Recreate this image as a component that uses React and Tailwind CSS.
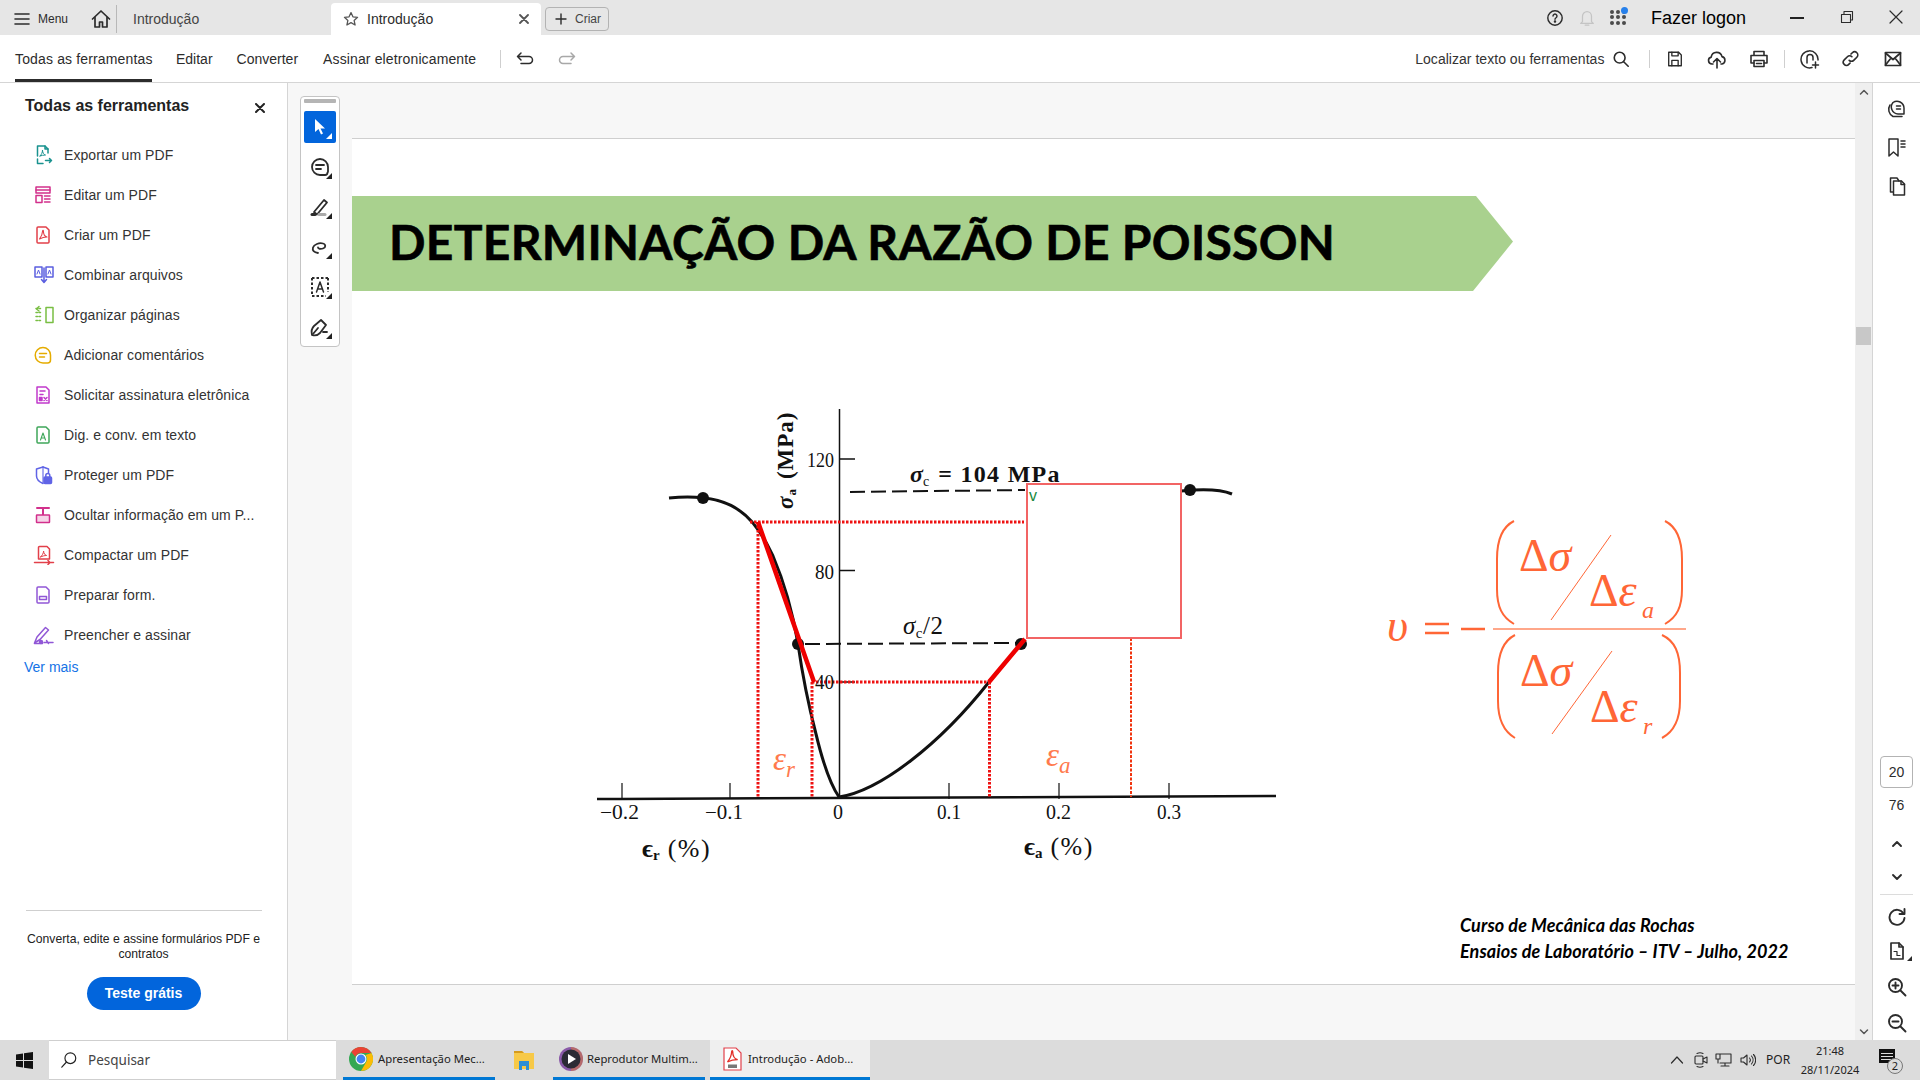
import React from "react";

const S = ({ w = 20, h = 20, vb = "0 0 20 20", c = "#2c2c2c", sw = 1.5, children, className = "" }) => (
  <svg width={w} height={h} viewBox={vb} fill="none" stroke={c} strokeWidth={sw} strokeLinecap="round" strokeLinejoin="round" className={"shrink-0 " + className}>{children}</svg>
);

const swoosh = "M6.5 14 C8 12 9.5 9 9.6 6 C9.7 5 10.4 5 10.4 6 C10.4 9 12 11.5 14 12 C11.5 12 9 12.6 6.5 14 Z";
const Tri = () => <path d="M24 18v6h-6z" fill="#222" stroke="none" />;

const tools = [
  ["Exportar um PDF", <S c="#19928f"><path d="M15 8V4l-3-3H4.500v10" /><path d="M4.500 14v4.500H10" /><path d="M12 1v3h3" /><path d="M7 11c1.500-1.500 2.500-3.500 2.500-6 0 3 1.500 4.500 3 5-2 0-4 .5-5.500 1z" strokeWidth="1" /><path d="M12.500 15.500h6m-2-2 2 2-2 2" /></S>],
  ["Editar um PDF", <S c="#d2308c"><rect x="3" y="2" width="14" height="6" /><path d="M3 5h14" /><rect x="3" y="10.500" width="6" height="7" /><path d="M11.500 11h5.500M11.500 14h5.500M11.500 17h5.500" /></S>],
  ["Criar um PDF", <S c="#e2404a"><path d="M13 2H5a1 1 0 0 0-1 1v14a1 1 0 0 0 1 1h10a1 1 0 0 0 1-1V5z" /><path d={swoosh} strokeWidth="1.100" /></S>],
  ["Combinar arquivos", <S w={22} vb="0 0 22 20" c="#5b5fe0"><path d="M2 2h7v10H2zM13 2h7v10h-7z" /><path d="M4 9l1.500-4 1.500 4M15 9l1.500-4 1.500 4" strokeWidth="1" /><path d="M11 3v14m-2.500-2.500 2.500 3 2.500-3" /></S>],
  ["Organizar páginas", <S w={22} vb="0 0 22 20" c="#79be43"><rect x="13" y="2.500" width="7" height="15" /><path d="M3 3.500h6M3 7.500h6M3 11.500h6M3 15.500h6" strokeDasharray="1.500 1.500" /><path d="M6 1.500 3.500 4 6 6" /></S>],
  ["Adicionar comentários", <S c="#e5ac00"><path d="M10 2.500a7.500 7.500 0 0 1 7.500 7.500v5a3 3 0 0 1-3 3H10a7.500 7.500 0 0 1 0-15.500z" /><path d="M6.500 8.500h7M6.500 12h5" /></S>],
  ["Solicitar assinatura eletrônica", <S c="#c13acb"><path d="M13 2H4v16h12V5z" /><path d="M7 6h5M7 9.500h3" /><rect x="6.500" y="12.500" width="2.500" height="3" fill="#c13acb" /><path d="m11 12.500 3 3m0-3-3 3" /></S>],
  ["Dig. e conv. em texto", <S c="#3fa65a"><path d="M13 2H5a1 1 0 0 0-1 1v14a1 1 0 0 0 1 1h10a1 1 0 0 0 1-1V5z" /><path d="M7.500 15l2.500-7 2.500 7M8.500 13h3" strokeWidth="1.100" /></S>],
  ["Proteger um PDF", <S c="#6064e6"><path d="M10 2 3.500 4v7c0 3.500 3 6 6.500 7.500" /><path d="M10 2l5.500 2v3.500" /><path d="M10 2v16" strokeWidth="1.100" /><rect x="11" y="12" width="7.500" height="6.500" rx="1" fill="#6064e6" /><path d="M12.800 12v-1.500a2 2 0 0 1 4 0V12" /></S>],
  ["Ocultar informação em um P...", <S c="#d2308c"><path d="M4 3h12M10 3v7" strokeWidth="2" /><rect x="3.500" y="10" width="13" height="7.500" rx=".500" fill="#f6d5e8" /></S>],
  ["Compactar um PDF", <S w={22} vb="0 0 22 20" c="#e2404a"><path d="M14 1.500H6.500a1 1 0 0 0-1 1V14h11V4z" /><path d="M7.500 12c1.500-1.500 3-3.500 3.100-6 .1 2.500 1.500 4 3 4.500-2 0-4 .5-6.100 1.500z" strokeWidth="1" /><path d="M1.500 17.500h19M15 15.500l2 2-2 2" /></S>],
  ["Preparar form.", <S c="#9157d6"><path d="M13 2H5a1 1 0 0 0-1 1v14a1 1 0 0 0 1 1h10a1 1 0 0 0 1-1V5z" /><rect x="6.500" y="11.500" width="7" height="3" /></S>],
  ["Preencher e assinar", <S w={22} vb="0 0 22 20" c="#9157d6"><path d="M1.500 18 4 12 12.500 2.500l3 2.500L7 14.500z" /><path d="M1.500 18.500h8" /><circle cx="8" cy="17" r="1.500" fill="#9157d6" /><path d="M11 17.500h9M13.500 15.500l2 3" /></S>],
];

function Slide() {
  return (
    <div className="w-[1503px] h-[847px] bg-white border-y border-[#cfcfcf] flex flex-col shrink-0">
      <div className="mt-[57px] w-[1161px] h-[95px] bg-[#a9d18e] [clip-path:polygon(0_0,1124px_0,100%_48%,1121px_100%,0_100%)] flex items-center pl-[37px] pb-[4px]">
        <span className="text-[48px] font-bold text-black whitespace-nowrap tracking-[0.3px] [-webkit-text-stroke:0.6px_black] font-['Lato',sans-serif]">DETERMINAÇÃO DA RAZÃO DE POISSON</span>
      </div>
      <div className="flex mt-[108px] ml-[238px]">
        <svg width="700" height="480" viewBox="590 400 700 480" className="shrink-0" fontFamily="'Liberation Serif',serif" fill="#111">
          <g stroke="#111" fill="none">
            <path d="M839.500 410V798" strokeWidth="1.500" />
            <path d="M597 800 C 800 800 1000 798 1276 797" strokeWidth="2.500" />
            <path d="M622 784V800M730 784V800M949 784V800M1059 784V800M1169 784V800" strokeWidth="1.200" />
            <path d="M840 460H855M840 571.500H855M840 683H855" strokeWidth="1.500" />
            <path d="M669 499C690 497 720 497 740 512C755 522 765 540 773 557C785 585 793 615 798 645C803 680 810 712 816 735C822 760 830 785 839 798" strokeWidth="3" />
            <path d="M839 798C880 792 940 745 989 683L1021 645" strokeWidth="3" />
            <path d="M1181 492 C1200 490 1220 490 1232 495" strokeWidth="3" />
            <path d="M850 493 L1025 491M805 645 L1016 644" strokeWidth="2" strokeDasharray="15 6" />
          </g>
          <circle cx="703" cy="499" r="6" /><circle cx="798" cy="645" r="6" /><circle cx="1021" cy="645" r="6" /><circle cx="1190" cy="491" r="6" />
          <g stroke="#ee1111" fill="none" strokeWidth="3" strokeDasharray="2.500 1.500">
            <path d="M750 523H1024M758 523V798M812 683H989M812 683V798M989.500 683V798" />
          </g>
          <path d="M1131 639V798" stroke="#f0340f" strokeWidth="2" strokeDasharray="3 1.500" />
          <path d="M758 523 814 683M989 683 1025 640" stroke="#ee0000" strokeWidth="4.500" fill="none" />
          <rect x="1027" y="485" width="154" height="154" fill="#fff" stroke="#f26464" strokeWidth="2" />
          <text x="1029" y="502" fontSize="16" fill="#188a3c" fontFamily="'Liberation Sans',sans-serif">v</text>
          <g fontSize="20">
            <text x="807" y="468" textLength="27" lengthAdjust="spacingAndGlyphs">120</text>
            <text x="815" y="580" textLength="19" lengthAdjust="spacingAndGlyphs">80</text>
            <text x="815" y="690" textLength="19" lengthAdjust="spacingAndGlyphs">40</text>
            <text x="600" y="820" textLength="39" lengthAdjust="spacingAndGlyphs">−0.2</text>
            <text x="705" y="820" textLength="38" lengthAdjust="spacingAndGlyphs">−0.1</text>
            <text x="833" y="820">0</text>
            <text x="937" y="820" textLength="24" lengthAdjust="spacingAndGlyphs">0.1</text>
            <text x="1046" y="820" textLength="25" lengthAdjust="spacingAndGlyphs">0.2</text>
            <text x="1157" y="820" textLength="24" lengthAdjust="spacingAndGlyphs">0.3</text>
          </g>
          <text x="642" y="858" fontSize="26" fontWeight="bold">ϵ<tspan fontSize="15" dy="3">r</tspan><tspan dy="-3" dx="8" fontWeight="normal" letterSpacing="1.500">(%)</tspan></text>
          <text x="1024" y="856" fontSize="26" fontWeight="bold">ϵ<tspan fontSize="15" dy="3">a</tspan><tspan dy="-3" dx="8" fontWeight="normal" letterSpacing="1.500">(%)</tspan></text>
          <text transform="translate(793 510) rotate(-90)" fontSize="23" fontWeight="bold" letterSpacing="1"><tspan fontStyle="italic">σ</tspan><tspan fontSize="13" dy="3">a</tspan><tspan dy="-3" dx="9">(MPa)</tspan></text>
          <text x="910" y="483" fontSize="24" fontWeight="bold"><tspan fontStyle="italic">σ</tspan><tspan fontSize="14" dy="4" fontWeight="normal">c</tspan><tspan dy="-4" dx="9" letterSpacing="1.300">= 104 MPa</tspan></text>
          <text x="903" y="635" fontSize="25" letterSpacing="0.500"><tspan fontStyle="italic">σ</tspan><tspan fontSize="15" dy="4">c</tspan><tspan dy="-4">/2</tspan></text>
          <text x="773" y="771" fontSize="33" fontStyle="italic" fill="#ff7a4d">ε<tspan fontSize="23" dy="7">r</tspan></text>
          <text x="1046" y="767" fontSize="33" fontStyle="italic" fill="#ff7a4d">ε<tspan fontSize="23" dy="7">a</tspan></text>
        </svg>
        <svg width="320" height="240" viewBox="1380 510 320 240" className="shrink-0 ml-[90px] mt-[110px]" fontFamily="'Liberation Serif',serif" fill="#ff6636">
          <text x="1387" y="642" fontSize="46" fontStyle="italic">υ</text>
          <g stroke="#ff6636" fill="none" strokeWidth="2">
            <path d="M1425 625H1449M1425 634H1449M1461 630H1485" strokeWidth="2.500" />
            <path d="M1493 630H1686" strokeWidth="1.500" stroke="#ff8a63" />
            <path d="M1611 536 1551 621M1612 652 1552 735" strokeWidth="1" />
            <path d="M1514 522C1502 528 1497 540 1497 560V590C1497 608 1502 618 1514 625M1665 522C1677 528 1682 540 1682 560V590C1682 608 1677 618 1665 625" />
            <path d="M1515 636C1503 642 1498 654 1498 674V702C1498 720 1503 732 1515 739M1662 636C1675 642 1680 654 1680 674V702C1680 720 1675 732 1662 739" />
          </g>
          <text x="1519" y="572" fontSize="46">Δ<tspan fontStyle="italic">σ</tspan></text>
          <text x="1589" y="607" fontSize="46">Δ<tspan fontStyle="italic">ε</tspan></text>
          <text x="1642" y="619" fontSize="24" fontStyle="italic">a</text>
          <text x="1520" y="687" fontSize="46">Δ<tspan fontStyle="italic">σ</tspan></text>
          <text x="1590" y="723" fontSize="46">Δ<tspan fontStyle="italic">ε</tspan></text>
          <text x="1643" y="735" fontSize="24" fontStyle="italic">r</text>
        </svg>
      </div>
      <div className="ml-[1108px] mt-[33px] text-[18px] tracking-[0.1px] leading-[26px] font-bold italic text-black whitespace-nowrap font-['Lato',sans-serif]">
        <div>Curso de Mecânica das Rochas</div>
        <div>Ensaios de Laboratório – ITV – Julho, 2022</div>
      </div>
    </div>
  );
}

function ToolBtn({ active, children }) {
  return <div className={"w-[32px] h-[32px] rounded-[2px] flex items-center justify-center " + (active ? "bg-[#0265dc]" : "")}>{children}</div>;
}

export default function App() {
  return (
    <div className="w-[1920px] h-[1080px] overflow-hidden flex flex-col bg-white text-[#2c2c2c] font-['Liberation_Sans',Arial,sans-serif]">
      {/* title bar */}
      <div className="h-[35px] shrink-0 bg-[#e6e6e6] flex items-center pt-[3px]">
        <S w={16} h={14} vb="0 0 16 14" sw={1.600} className="ml-[14px]"><path d="M1 2h14M1 7h14M1 12h14" /></S>
        <span className="ml-[8px] text-[12px]">Menu</span>
        <S sw={1.700} className="ml-[23px]"><path d="M1.500 10 10 2l8.500 8" /><path d="M4 8.500V18h4.500v-5h3v5H16V8.500" /></S>
        <div className="ml-[5px] w-px h-[28px] bg-[#b8b8b8]" />
        <span className="ml-[16px] text-[14px] text-[#444] w-[198px]">Introdução</span>
        <div className="self-end w-[210px] h-[32px] bg-white rounded-t-[4px] flex items-center pl-[12px]">
          <S w={16} h={16} sw={1.600} vb="0 0 20 20" c="#555"><path d="m10 2 2.400 5.300 5.800.6-4.300 3.900 1.200 5.700-5.100-2.900-5.100 2.900 1.200-5.700L1.800 7.900l5.800-.6z" /></S>
          <span className="ml-[8px] text-[14px]">Introdução</span>
          <S w={10} h={10} vb="0 0 10 10" sw={1.800} c="#555" className="ml-[86px]"><path d="m1 1 8 8M9 1 1 9" /></S>
        </div>
        <div className="ml-[4px] w-[64px] h-[24px] rounded-[4px] border border-[#b3b3b3] flex items-center pl-[9px] gap-[8px]">
          <S w={12} h={12} vb="0 0 12 12" sw={1.400}><path d="M6 1v10M1 6h10" /></S>
          <span className="text-[12px] text-[#444]">Criar</span>
        </div>
        <S w={18} h={18} sw={1.600} className="ml-[937px] -mt-[3px]"><circle cx="10" cy="10" r="8" /><path d="M7.800 7.800a2.200 2.200 0 1 1 3.400 1.900c-.8.500-1.200.9-1.200 1.800" /><circle cx="10" cy="14" r=".6" fill="#2c2c2c" /></S>
        <S w={18} h={20} sw={1.400} c="#c4c4c4" className="ml-[14px] -mt-[3px]"><path d="M5 14V8a5 5 0 0 1 10 0v6l2 2H3zM8 18h4" /></S>
        <div className="relative ml-[14px] w-[16px] h-[16px] grid grid-cols-3 gap-[1.500px] -mt-[3px]">
          {Array.from({ length: 9 }).map((_, i) => <span key={i} className="w-[4px] h-[4px] rounded-full bg-[#4b4b4b]" />)}
          <span className="absolute -top-[3px] -right-[2px] w-[7px] h-[7px] rounded-full bg-[#2680eb]" />
        </div>
        <span className="ml-[25px] text-[18px] text-black -mt-[1px]">Fazer logon</span>
        <div className="ml-[44px] w-[14px] h-[2px] bg-[#222] -mt-[3px]" />
        <S w={14} h={14} vb="0 0 14 14" sw={1.100} className="ml-[36px] -mt-[4px]"><path d="M1.500 4.500h9v8h-9zM4 4.500V1.500h8.500v8.500h-2" /></S>
        <S w={14} h={14} vb="0 0 14 14" sw={1.200} className="ml-[35px] -mt-[4px]"><path d="m1 1 12 12M13 1 1 13" /></S>
      </div>
      {/* toolbar */}
      <div className="h-[48px] shrink-0 bg-white border-b border-[#d5d5d5] flex items-center text-[14px] pt-[1px]">
        <div className="ml-[15px] h-full flex items-center border-b-[3px] border-[#2c2c2c] pt-[3px] w-[137px] whitespace-nowrap tracking-[0.15px]">Todas as ferramentas</div>
        <span className="ml-[24px]">Editar</span>
        <span className="ml-[24px]">Converter</span>
        <span className="ml-[25px] tracking-[0.13px]">Assinar eletronicamente</span>
        <div className="ml-[24px] w-px h-[18px] bg-[#cfcfcf]" />
        <S w={18} h={16} vb="0 0 18 16" sw={1.500} className="ml-[15px]"><path d="M5 2 1.500 5.500 5 9M1.500 5.500H13a3.500 3.500 0 0 1 0 7H5" /></S>
        <S w={18} h={16} vb="0 0 18 16" sw={1.500} c="#a8a8a8" className="ml-[24px]"><path d="M13 2l3.500 3.500L13 9M16.500 5.500H5a3.500 3.500 0 0 0 0 7h8" /></S>
        <span className="ml-[839px] text-[#333] whitespace-nowrap tracking-[0.03px]">Localizar texto ou ferramentas</span>
        <S w={18} h={18} sw={1.800} className="ml-[8px]"><circle cx="8.500" cy="8.500" r="6" /><path d="m13 13 5 5" /></S>
        <div className="ml-[19px] w-px h-[18px] bg-[#cfcfcf]" />
        <S w={18} h={18} sw={1.500} className="ml-[16px]"><path d="M3 2.500h11l3 3V17.500H3z" /><path d="M6.500 2.500v4h7v-4M6.500 17.500v-6h7v6" /></S>
        <S w={20} h={20} sw={1.600} className="ml-[23px]"><path d="M6 15H5a3.500 3.500 0 0 1-.8-6.900 5.500 5.500 0 0 1 10.800-.5A3.800 3.800 0 0 1 15 15h-1" /><path d="M10 19v-9m-3.500 3L10 9.500l3.500 3.500" /></S>
        <S w={20} h={20} sw={1.600} className="ml-[22px]"><path d="M5 6V2.500h10V6M5 14H2V6.500h16V14h-3" /><path d="M5 11.500h10v6H5zM7.500 14.500h5" /></S>
        <div className="ml-[15px] w-px h-[18px] bg-[#cfcfcf]" />
        <S w={20} h={20} sw={1.500} className="ml-[15px]"><path d="M12 18.500A8.500 8.500 0 1 1 18 11" /><path d="M7 14V8.500a3 3 0 0 1 6 0V11" /><path d="M15.500 13v6m-3-3h6" /></S>
        <S w={18} h={18} sw={1.800} className="ml-[22px]"><path d="M8 11.500a3.500 3.500 0 0 0 5 0l3.500-3.500a3.500 3.500 0 0 0-5-5L10 4.500" /><path d="M11 7.500a3.500 3.500 0 0 0-5 0L2.500 11a3.500 3.500 0 0 0 5 5L9 14.500" /></S>
        <S w={18} h={16} vb="0 0 18 16" sw={1.700} className="ml-[24px]"><rect x="1.500" y="1.500" width="15" height="13" /><path d="m1.500 2 7.500 6.500L16.500 2M1.500 14l5.500-7M16.500 14 11 7" /></S>
      </div>
      {/* main */}
      <div className="flex-1 flex min-h-0">
        <aside className="w-[288px] shrink-0 border-r border-[#d5d5d5] bg-white flex flex-col">
          <div className="flex items-center mt-[12px] ml-[25px] h-[22px]">
            <span className="text-[16px] font-bold text-[#222]">Todas as ferramentas</span>
            <S w={10} h={10} vb="0 0 10 10" sw={2} c="#222" className="ml-[66px] mt-[4px]"><path d="m1 1 8 8M9 1 1 9" /></S>
          </div>
          <div className="mt-[18px] flex flex-col">
            {tools.map(([t, ic]) => (
              <div key={t} className="h-[40px] flex items-center text-[14px] text-[#333] tracking-[0.08px]">
                <span className="w-[64px] pl-[33px] flex items-center">{ic}</span>
                <span className="whitespace-nowrap">{t}</span>
              </div>
            ))}
          </div>
          <span className="ml-[24px] mt-[2px] text-[14px] text-[#1473e6]">Ver mais</span>
          <div className="mt-auto mb-[30px] flex flex-col items-center">
            <div className="w-[236px] h-px bg-[#cfcfcf]" />
            <p className="mt-[21px] w-[240px] text-center text-[12.200px] leading-[15px] text-[#222]">Converta, edite e assine formulários PDF e contratos</p>
            <div className="mt-[15px] w-[114px] h-[33px] rounded-full bg-[#0265dc] text-white font-bold text-[14px] flex items-center justify-center">Teste grátis</div>
          </div>
        </aside>
        <main className="flex-1 min-w-0 bg-[#f7f7f7] flex">
          <div className="w-[64px] shrink-0 pl-[12px] pt-[13px]">
            <div className="w-[40px] h-[251px] rounded-[4px] border border-[#c4c4c4] bg-white flex flex-col items-center pt-[2px] gap-[8px]">
              <div className="w-[32px] h-[4px] rounded-[1px] bg-[#b5b5b5]" />
              <ToolBtn active>
                <S c="#fff" w={24} h={24} vb="0 0 24 24" sw={0}>
                  <path d="M7 4v13l3.500-3 2.500 5.500 2-1-2.500-5H17z" fill="#fff" />
                  <path d="M24 18v6h-6z" fill="#fff" />
                </S>
              </ToolBtn>
              <ToolBtn>
                <S w={24} h={24} vb="0 0 24 24" sw={1.800}><path d="M12 4a8 8 0 0 0 0 16h5a2.500 2.500 0 0 0 2.500-2.500 1 1 0 0 0 .5-1V12a8 8 0 0 0-8-8z" /><path d="M8 10h8M8 14h5" /><Tri /></S>
              </ToolBtn>
              <ToolBtn>
                <S w={24} h={24} vb="0 0 24 24" sw={1.800}><path d="m6 17 10-12 3 2.500-10 12z" /><path d="M4 19.500h3" strokeWidth="3" /><path d="M11 19.500h6" stroke="#aaa" strokeWidth="3" /><Tri /></S>
              </ToolBtn>
              <ToolBtn>
                <S w={24} h={24} vb="0 0 24 24" sw={1.800}><path d="M10 18c-4-.5-6-2.500-5-5.500s6-5 10-4c3 .8 3 4 0 5-2.500.8-5 .2-5-1" /><Tri /></S>
              </ToolBtn>
              <ToolBtn>
                <S w={24} h={24} vb="0 0 24 24" sw={2}><path d="M4 3h16M4 21h14M4 3v18M20 3v14" strokeDasharray="2.500 2" strokeLinecap="butt" /><path d="M8.500 17 12 7l3.500 10M9.500 14h5" strokeWidth="1.500" /><Tri /></S>
              </ToolBtn>
              <ToolBtn>
                <S w={24} h={24} vb="0 0 24 24" sw={1.800}><path d="M4 20c-1-4 0-7 2-9l7-6 5 5-6 8c-2 2-5 3-8 2z" /><path d="m5 19 5-6" /><path d="M15 17h4" /><Tri /></S>
              </ToolBtn>
            </div>
          </div>
          <div className="pt-[55px]"><Slide /></div>
        </main>
        {/* scrollbar */}
        <div className="w-[18px] shrink-0 bg-[#efefef] border-r border-[#d5d5d5] flex flex-col items-center pt-[5px] pb-[4px]">
          <S w={10} h={8} vb="0 0 10 8" sw={1.500} c="#555"><path d="m1.500 6 3.500-3.500L8.500 6" /></S>
          <div className="mt-[231px] w-[15px] h-[18px] bg-[#c8c8c8]" />
          <S w={10} h={8} vb="0 0 10 8" sw={1.500} c="#555" className="mt-auto"><path d="m1.500 2 3.500 3.500L8.500 2" /></S>
        </div>
        {/* right rail */}
        <div className="w-[47px] shrink-0 bg-white flex flex-col items-center">
          <S sw={1.500} className="mt-[15px] -ml-[2px]"><path d="M7 4.500a7 7 0 0 1 11 5.500v6h-6a7 7 0 0 1-5-11.500z" /><path d="M4 7a8 8 0 0 0 3 11.500h9" /><path d="M10.500 8h4M10.500 11h4" /></S>
          <S sw={1.500} className="mt-[19px] -ml-[2px]"><path d="M3 2h9v17l-4.500-4L3 19z" /><path d="M15 4h4M15 7h4M15 10h4" /></S>
          <S sw={1.500} className="mt-[19px] -ml-[2px]"><path d="M7.500 5V19h11V8l-3-3z" /><path d="M15 5v3.500h3.500" /><path d="M7 16H4.500V2H11l2 3" /></S>
          <div className="mt-[560px] w-[33px] h-[32px] rounded-[4px] border border-[#b3b3b3] text-[14px] flex items-center justify-center">20</div>
          <span className="mt-[9px] text-[14px] leading-[17px]">76</span>
          <S w={12} h={10} vb="0 0 12 10" sw={1.900} className="mt-[25px]"><path d="m2 7 4-4 4 4" /></S>
          <S w={12} h={10} vb="0 0 12 10" sw={1.900} className="mt-[23px]"><path d="m2 3 4 4 4-4" /></S>
          <div className="mt-[12px] w-[33px] h-px bg-[#dcdcdc]" />
          <S sw={1.900} className="mt-[11px]"><path d="M16.500 7.500A7.500 7.500 0 1 0 17.500 12" /><path d="M17.500 3v5h-5" /></S>
          <div className="relative mt-[15px] w-[20px] h-[20px]">
            <S sw={1.700}><path d="M12 2H4v16h12V6z" /><path d="M12 2v4h4" /><path d="M7 10.500h3v3M13 14.500h-3v-3" strokeWidth="1.200" /></S>
            <svg width="5" height="5" viewBox="0 0 5 5" className="absolute -right-[5px] bottom-0"><path d="M5 0v5H0z" fill="#2c2c2c" /></svg>
          </div>
          <S sw={1.900} className="mt-[16px]"><circle cx="8.500" cy="8.500" r="6.500" /><path d="m13.500 13.500 5 5M8.500 5.500v6M5.500 8.500h6" /></S>
          <S sw={1.900} className="mt-[16px]"><circle cx="8.500" cy="8.500" r="6.500" /><path d="m13.500 13.500 5 5M5.500 8.500h6" /></S>
        </div>
      </div>
      {/* taskbar */}
      <div className="h-[40px] shrink-0 bg-[#dcdcdc] flex items-stretch font-['Noto_Sans',sans-serif] text-[11.300px] text-[#222]">
        <div className="w-[49px] flex items-center justify-center">
          <svg width="17" height="17" viewBox="0 0 17 17" fill="#111" className="shrink-0"><path d="M0 2.500 7 1.500V8H0zM8 1.300 17 0v8H8zM0 9h7v6.500L0 14.500zM8 9h9v8l-9-1.300z" /></svg>
        </div>
        <div className="w-[287px] bg-white border-y border-[#cfcfcf] flex items-center pl-[11px]">
          <S w={18} h={18} sw={1.300} c="#222"><circle cx="11.500" cy="8" r="6" /><path d="M7 12.500 2 18" /></S>
          <span className="ml-[10px] text-[13.500px] text-[#444]">Pesquisar</span>
        </div>
        <div className="ml-[7px] w-[152px] border-b-[3px] border-[#0078d4] flex items-center pl-[6px] pt-[2px]">
          <svg width="24" height="24" viewBox="0 0 24 24" className="shrink-0 -mt-[2px]">
            <circle cx="12" cy="12" r="12" fill="#34a853" />
            <path d="M12 0a12 12 0 0 1 10.400 6H12a6 6 0 0 0-5.600 3.800L2.300 4.900A12 12 0 0 1 12 0z" fill="#ea4335" />
            <path d="M22.400 6A12 12 0 0 1 12 24l5.200-9A6 6 0 0 0 16.500 8z" fill="#fbbc05" />
            <circle cx="12" cy="12" r="5.500" fill="#fff" /><circle cx="12" cy="12" r="4.400" fill="#4285f4" />
          </svg>
          <span className="ml-[5px] whitespace-nowrap">Apresentação Mec...</span>
        </div>
        <div className="w-[58px] flex items-center justify-center">
          <svg width="22" height="22" viewBox="0 0 22 22" className="shrink-0"><path d="M1 2h8l2 2h10v16H1z" fill="#f7c948" /><path d="M1 2h8l2 2H1z" fill="#d59b1e" /><path d="M6 12h10v9h-3v-4H9v4H6z" fill="#2d8fd5" /></svg>
        </div>
        <div className="w-[152px] border-b-[3px] border-[#0078d4] flex items-center pl-[6px] pt-[2px]">
          <svg width="24" height="24" viewBox="0 0 24 24" className="shrink-0 -mt-[2px]"><circle cx="12" cy="12" r="12" fill="#8a5aa8" /><path d="M12 0a12 12 0 0 1 0 24z" fill="#d9793b" opacity=".55" /><circle cx="12" cy="12" r="9.500" fill="#2b2b35" /><path d="M9 7v10l8-5z" fill="#fff" /></svg>
          <span className="ml-[4px] whitespace-nowrap">Reprodutor Multim...</span>
        </div>
        <div className="ml-[5px] w-[160px] bg-[#efefef] border-b-[3px] border-[#0078d4] flex items-center pl-[13px] pt-[2px]">
          <svg width="19" height="24" viewBox="0 0 19 24" fill="none" className="shrink-0 -mt-[2px]"><path d="M1 1h12l5 5v17H1z" fill="#fff" stroke="#e2404a" strokeWidth="1.200" /><path d="M4.500 15C6.500 12.500 8.500 8.500 8.700 4.500c0-1.200 1-1.200 1 0 0 4 2 7.500 5 8.200-3.500 0-7 .7-10.200 2.300z" fill="none" stroke="#e2302a" strokeWidth="1.300" /><rect x="5" y="17.500" width="9" height="3.500" fill="#777" /></svg>
          <span className="ml-[6px] whitespace-nowrap">Introdução - Adob...</span>
        </div>
        <div className="ml-auto flex items-center">
          <S w={14} h={10} vb="0 0 14 10" sw={1.200}><path d="m1.500 8 5.500-6 5.500 6" /></S>
          <S w={14} h={18} vb="0 0 14 18" sw={1.100} className="ml-[10px]"><rect x="1" y="5" width="8" height="8" rx="1" /><path d="m9 8 4-2v6l-4-2M3 2.500c2-1 4-1 6 0M3 15.500c2 1 4 1 6 0" /></S>
          <S w={17} h={14} vb="0 0 17 14" sw={1.100} className="ml-[7px]"><path d="M5 1h11v9H5M1 1h4v5H1zM3 6v4M10 10v3M6 13h8" /></S>
          <S w={16} h={14} vb="0 0 16 14" sw={1.100} className="ml-[8px]"><path d="M1 5v4h2.500L7 12V2L3.500 5zM9.500 5a3 3 0 0 1 0 4M11.500 3a6 6 0 0 1 0 8M13.500 1.500a8 8 0 0 1 0 11" /></S>
          <span className="ml-[10px] w-[24px] text-[12px]">POR</span>
          <div className="ml-[9px] w-[62px] text-center leading-[19px] whitespace-nowrap text-[11px]">
            <div>21:48</div>
            <div>28/11/2024</div>
          </div>
          <div className="relative ml-[18px] mr-[25px] w-[16px] h-[14px] bg-[#111] -mt-[8px] flex flex-col justify-center gap-[2px] px-[2px]">
            <span className="block h-px bg-[#dcdcdc]" />
            <span className="block h-px bg-[#dcdcdc]" />
            <span className="block h-px bg-[#dcdcdc]" />
            <span className="absolute -right-[8px] -bottom-[11px] w-[16px] h-[16px] rounded-full bg-[#dcdcdc] border border-[#777] text-[11px] leading-[14px] text-center">2</span>
          </div>
        </div>
      </div>
    </div>
  );
}
